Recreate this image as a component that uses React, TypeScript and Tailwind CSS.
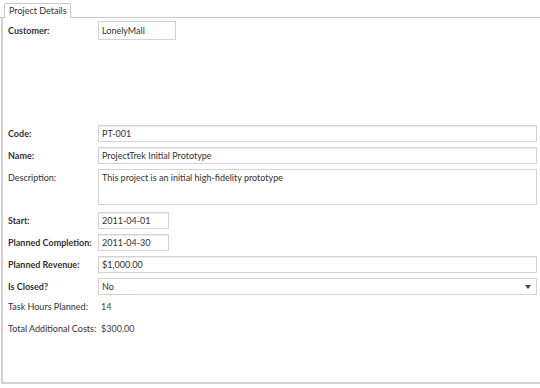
const rows = [
  { label: "Code:", value: "PT-001", bold: true, width: "flex-1" },
  { label: "Name:", value: "ProjectTrek Initial Prototype", bold: true, width: "flex-1" },
];

function Field({ value, className }: { value: string; className: string }) {
  return (
    <div
      className={`flex h-[17px] items-center whitespace-nowrap border border-[#d3d3d3] bg-white px-[3px] text-[9px] text-[#333] shadow-[inset_0_1px_0_#ececec] ${className}`}
    >
      {value}
    </div>
  );
}

function Label({ text, bold }: { text: string; bold?: boolean }) {
  return (
    <div
      className={`w-[90px] shrink-0 whitespace-nowrap text-[9px] text-[#333] ${bold ? "font-bold" : ""}`}
    >
      {text}
    </div>
  );
}

export default function App() {
  return (
    <div
      className="h-[388px] w-[540px] overflow-hidden bg-white pt-[3px]"
      style={{ fontFamily: 'Lato, "Open Sans", sans-serif' }}
    >
      <div className="flex items-end">
        <div className="w-[4px] border-b border-[#c9c9c9]" />
        <div className="flex h-[15px] w-[67px] items-center whitespace-nowrap rounded-t-[2px] border border-b-0 border-[#c9c9c9] bg-white pl-[4px] text-[9px] text-[#333]">
          Project Details
        </div>
        <div className="flex-1 border-b border-[#c9c9c9]" />
      </div>

      <div className="ml-[1px] h-[366px] border-l-2 border-b-2 border-[#d2d2d2] pr-[3px] pl-[5px]">
        <div className="flex items-center pt-[3px]">
          <Label text="Customer:" bold />
          <div className="flex h-[19px] w-[78px] items-center border border-[#d3d3d3] px-[3px] text-[9px] text-[#333]">
            LonelyMall
          </div>
        </div>

        <div className="mt-[85px] flex flex-col gap-[5px]">
          {rows.map((r) => (
            <div key={r.label} className="flex items-center">
              <Label text={r.label} bold={r.bold} />
              <Field value={r.value} className={r.width} />
            </div>
          ))}
          <div className="flex items-start">
            <div className="pt-[2px]">
              <Label text="Description:" />
            </div>
            <div className="h-[36px] flex-1 border border-[#d3d3d3] px-[3px] pt-[1px] text-[9px] text-[#333]">
              This project is an initial high-fidelity prototype
            </div>
          </div>
          <div className="mt-[2px] flex items-center">
            <Label text="Start:" bold />
            <Field value="2011-04-01" className="w-[71px]" />
          </div>
          <div className="flex items-center">
            <Label text="Planned Completion:" bold />
            <Field value="2011-04-30" className="w-[71px]" />
          </div>
          <div className="flex items-center">
            <Label text="Planned Revenue:" bold />
            <Field value="$1,000.00" className="flex-1" />
          </div>
          <div className="flex items-center">
            <Label text="Is Closed?" bold />
            <div className="flex h-[17px] flex-1 items-center justify-between border border-[#d3d3d3] px-[3px] text-[9px] text-[#333]">
              <span>No</span>
              <svg width="6" height="4" viewBox="0 0 6 4" className="mr-[2px]">
                <path d="M0 0h6L3 4z" fill="#444" />
              </svg>
            </div>
          </div>
          <div className="flex items-center text-[9px] text-[#444]">
            <Label text="Task Hours Planned:" />
            <span className="pl-[3px]">14</span>
          </div>
          <div className="mt-[3px] flex items-center text-[9px] text-[#444]">
            <Label text="Total Additional Costs:" />
            <span className="pl-[3px]">$300.00</span>
          </div>
        </div>
      </div>
    </div>
  );
}
